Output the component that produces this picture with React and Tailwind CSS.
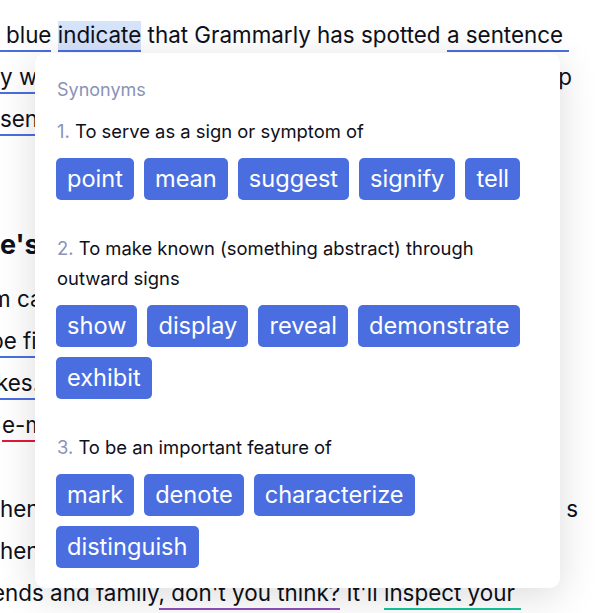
import React from 'react'

const blue = 'border-b-2 border-[#4a6ee0] pb-[2px]'
const red = 'border-b-2 border-[#e2183b] pb-[2px]'
const purple = 'border-b-2 border-[#8d4fbf] pb-[2px]'
const green = 'border-b-2 border-[#15c39a] pb-[2px]'

const groups = [
  {
    n: '1.',
    label: 'To serve as a sign or symptom of',
    words: ['point', 'mean', 'suggest', 'signify', 'tell'],
  },
  {
    n: '2.',
    label: 'To make known (something abstract) through outward signs',
    words: ['show', 'display', 'reveal', 'demonstrate', 'exhibit'],
  },
  {
    n: '3.',
    label: 'To be an important feature of',
    words: ['mark', 'denote', 'characterize', 'distinguish'],
  },
]

function Line({ children, className = '' }) {
  return <div className={`h-[42px] leading-[42px] whitespace-nowrap ${className}`}>{children}</div>
}

function SynonymsCard() {
  return (
    <div className="absolute left-[35px] top-[53px] w-[525px] rounded-[10px] bg-white pt-[25px] pl-[21px] pr-[22px] pb-[20px] shadow-[0_8px_40px_rgba(0,0,0,0.14)]">
      <div className="pl-[1px] text-[18px] leading-[24px] text-[#8a93b6]">Synonyms</div>
      <div className="mt-[14px] flex flex-col gap-[33px]">
        {groups.map((g) => (
          <div key={g.n}>
            <div className="pl-[1px] text-[18.4px] leading-[30px] text-[#0e101a]">
              <span className="text-[#8a93b6]">{g.n}</span> {g.label}
            </div>
            <div className="mt-[12px] flex flex-wrap gap-[10px]">
              {g.words.map((w) => (
                <button
                  key={w}
                  className="h-[42px] rounded-[5px] bg-[#4a6ee0] px-[11px] text-[23.6px] leading-none text-white"
                >
                  {w}
                </button>
              ))}
            </div>
          </div>
        ))}
      </div>
    </div>
  )
}

export default function App() {
  return (
    <div className="relative h-[613px] w-[598px] overflow-hidden bg-white font-['Inter',sans-serif] text-[22.4px] text-[#0e101a]">
      <div className="pt-[14px]">
        <Line className="pl-[6px]">
          <span className={`${blue} -ml-[6px] pl-[6px]`}>blue</span>{' '}
          <span className={`${blue} bg-[#d5e3fb]`}>indicate</span> that Grammarly has spotted{' '}
          <span className={blue}>a sentence{'\u00a0'}</span>
        </Line>
        <Line className="flex justify-between pr-[26px]">
          <span><span className={blue}>y wordy. You'll find</span></span>
          <span>help</span>
        </Line>
        <Line>
          <span className={blue}>sentence</span> in an effortless manner.
        </Line>
        <div className="mt-[84px] h-[42px] whitespace-nowrap text-[27px] font-bold leading-[42px]">
          e's more?
        </div>
        <div className="mt-[12px]">
          <Line>
            <span className="-ml-[9px]">m can give you very helpful feedback</span>
          </Line>
          <Line>
            <span className={`${blue} -ml-[10px]`}>be fixed by Grammarly</span>
          </Line>
          <Line>
            <span className={`${blue} -ml-[4px]`}>kes.</span> It can also help
          </Line>
          <Line>
            <span className={`${red} ml-[2px]`}>e-mail</span> and email
          </Line>
        </div>
        <div className="mt-[42px]">
          <Line className="flex justify-between pr-[20px]">
            <span>hen you wanna refine</span>
            <span>s</span>
          </Line>
          <Line>hen writing for a broad audience</Line>
          <Line>
            <span className="-ml-[8px]">ends and family</span>
            <span className={purple}>, don't you think?</span> It'll{' '}
            <span className={green}>inspect your{'\u00a0'}</span>
          </Line>
        </div>
      </div>
      <SynonymsCard />
    </div>
  )
}
